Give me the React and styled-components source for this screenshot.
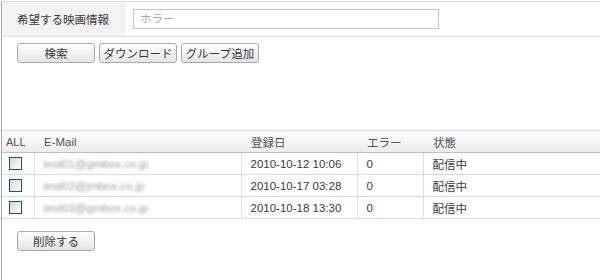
import React from "react";
import styled, { createGlobalStyle } from "styled-components";

const GlobalStyle = createGlobalStyle`
  body {
    margin: 0;
    background: #fff;
    font-family: "Liberation Sans", "Noto Sans CJK JP", sans-serif;
    font-size: 12px;
    color: #333;
  }
`;

const Page = styled.div`
  margin-left: 1px;
  border-left: 1px solid #a8a8a8;
  min-height: 280px;
  box-sizing: border-box;
`;

const FormRow = styled.div`
  display: grid;
  grid-template-columns: 124px 1fr;
  margin-top: 1px;
  border-top: 1px solid #dedede;
  border-bottom: 1px solid #dedede;
  height: 34px;
`;

const FormLabel = styled.div`
  display: flex;
  align-items: center;
  padding-left: 15px;
  background: #f3f3f3;
  font-size: 11.5px;
  color: #3a3a3a;
`;

const FormField = styled.div`
  display: flex;
  align-items: center;
  padding-left: 7px;
`;

const TextInput = styled.input`
  width: 306px;
  height: 20px;
  box-sizing: border-box;
  border: 1px solid #c4c4c4;
  padding: 0 6px;
  font-family: inherit;
  font-size: 11.5px;
  color: #333;
  outline: none;

  &::placeholder {
    color: #a8a8a8;
  }
`;

const ButtonBar = styled.div`
  display: flex;
  gap: 4px;
  padding: 6px 0 0 15px;
`;

const Button = styled.button`
  width: 78px;
  height: 20px;
  padding: 0;
  border: 1px solid #a9a9a9;
  border-radius: 3px;
  background: linear-gradient(#ffffff, #e4e4e4);
  font-family: inherit;
  font-size: 11.5px;
  color: #3a3a3a;
  cursor: pointer;
`;

const Table = styled.table`
  width: 100%;
  margin-top: 67px;
  border-collapse: collapse;
`;

const HeadCell = styled.th`
  height: 21px;
  padding: 0 0 0 ${(p) => (p.$first ? 4 : 10)}px;
  width: ${(p) => p.$width || "auto"};
  text-align: left;
  font-weight: normal;
  font-size: ${(p) => (p.$small ? 11 : 11.5)}px;
  color: #555;
  background: linear-gradient(#fdfdfd, #ececec);
  border-top: 1px solid #dcdcdc;
  border-bottom: 1px solid #bdbdbd;
`;

const Cell = styled.td`
  height: 21px;
  padding: 0 0 0 ${(p) => (p.$first ? 7 : 9)}px;
  border-bottom: 1px solid #dcdcdc;
  border-left: ${(p) => (p.$first ? "none" : "1px solid #dcdcdc")};
  font-size: 11.5px;
  color: #3a3a3a;
  vertical-align: middle;
`;

const Check = styled.span`
  display: block;
  width: 13px;
  height: 13px;
  box-sizing: border-box;
  border: 1px solid #1c4f80;
  background: linear-gradient(135deg, #d6d6d6, #ffffff);
`;

const Blurred = styled.span`
  display: inline-block;
  color: #a0a0a0;
  filter: blur(1.4px);
`;

const Footer = styled.div`
  padding: 12px 0 0 15px;
`;

const rows = [
  { email: "test01@gmbox.co.jp", date: "2010-10-12 10:06", error: 0, status: "配信中" },
  { email: "test02@jmbox.co.jp", date: "2010-10-17 03:28", error: 0, status: "配信中" },
  { email: "test03@gmbox.co.jp", date: "2010-10-18 13:30", error: 0, status: "配信中" },
];

export default function App() {
  return (
    <>
      <GlobalStyle />
      <Page>
        <FormRow>
          <FormLabel>希望する映画情報</FormLabel>
          <FormField>
            <TextInput placeholder="ホラー" />
          </FormField>
        </FormRow>
        <ButtonBar>
          <Button>検索</Button>
          <Button>ダウンロード</Button>
          <Button>グループ追加</Button>
        </ButtonBar>
        <Table>
          <thead>
            <tr>
              <HeadCell $first $small $width="28px">ALL</HeadCell>
              <HeadCell $width="197px">E-Mail</HeadCell>
              <HeadCell $width="106px">登録日</HeadCell>
              <HeadCell $width="56px">エラー</HeadCell>
              <HeadCell>状態</HeadCell>
            </tr>
          </thead>
          <tbody>
            {rows.map((row, i) => (
              <tr key={i}>
                <Cell $first>
                  <Check />
                </Cell>
                <Cell>
                  <Blurred>{row.email}</Blurred>
                </Cell>
                <Cell>{row.date}</Cell>
                <Cell>{row.error}</Cell>
                <Cell>{row.status}</Cell>
              </tr>
            ))}
          </tbody>
        </Table>
        <Footer>
          <Button>削除する</Button>
        </Footer>
      </Page>
    </>
  );
}
